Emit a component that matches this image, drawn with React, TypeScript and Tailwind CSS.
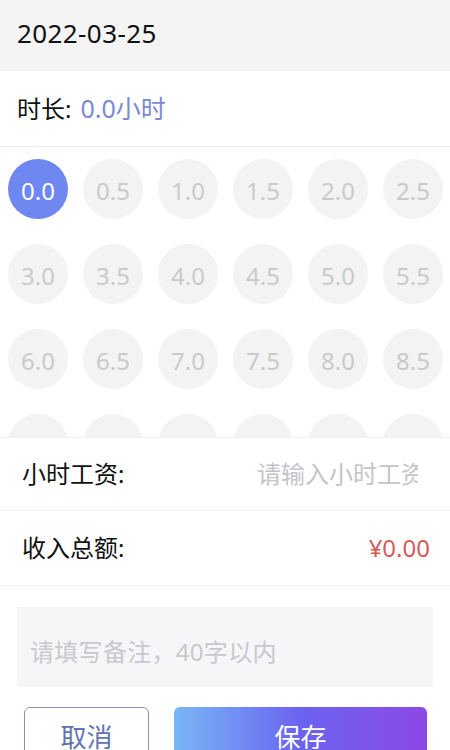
import React from "react";

const values = Array.from({ length: 24 }, (_, i) => (i * 0.5).toFixed(1));

export default function App() {
  const font = { fontFamily: '"Noto Sans", "Noto Sans CJK SC", sans-serif' };
  return (
    <div className="w-[450px] h-[750px] overflow-hidden bg-white text-[#111]" style={font}>
      <div className="h-[71px] bg-[#f4f4f4] flex items-center px-[17px] pb-[5px]">
        <span className="text-[26px] tracking-[0.4px]">2022-03-25</span>
      </div>
      <div className="h-[76px] flex items-center px-[17px] border-b border-[#efefef]">
        <span className="text-[24px]">时长:</span>
        <span className="text-[25px] text-[#7a8ad3] ml-[9px]">0.0小时</span>
      </div>
      <div className="h-[290px] overflow-hidden pt-[12px] pl-[8px]">
        <div className="grid grid-cols-[repeat(6,60px)] gap-x-[15px] gap-y-[25px]">
          {values.map((v, i) => (
            <div
              key={v}
              className={
                i === 0
                  ? "w-[60px] h-[60px] rounded-full bg-[#6f87f1] text-white flex items-center justify-center text-[24px] pt-[4px]"
                  : "w-[60px] h-[60px] rounded-full bg-[#f3f3f3] text-[#cacaca] flex items-center justify-center text-[24px] pt-[4px]"
              }
            >
              {v}
            </div>
          ))}
        </div>
      </div>
      <div className="h-[74px] flex items-center justify-between pl-[22px] pr-[32px] border-t border-b border-[#f0f0f0]">
        <span className="text-[24px]">小时工资:</span>
        <input
          className="w-[161px] text-[24px] outline-none bg-transparent placeholder:text-[#c4c4ca]"
          placeholder="请输入小时工资"
          style={font}
        />
      </div>
      <div className="h-[75px] flex items-center justify-between pl-[22px] pr-[20px] border-b border-[#f0f0f0]">
        <span className="text-[24px]">收入总额:</span>
        <span className="text-[24px] text-[#d65a5a]">¥0.00</span>
      </div>
      <div className="mt-[21px] mx-[17px] h-[80px] bg-[#f6f6f8] flex items-center px-[13px] pt-[10px]">
        <span className="text-[24px] text-[#c8c8cd] tracking-[0.3px]">请填写备注，40字以内</span>
      </div>
      <div className="mt-[20px] flex pl-[24px] gap-[25px]">
        <div className="w-[125px] h-[56px] rounded-[6px] border border-[#8b94b8] flex items-center justify-center text-[26px] text-[#6272b2] pt-[4px]">
          取消
        </div>
        <div className="w-[253px] h-[56px] rounded-[6px] bg-gradient-to-r from-[#7ab6f4] via-[#6a62f0] to-[#8c48e6] flex items-center justify-center text-[26px] text-white pt-[4px]">
          保存
        </div>
      </div>
    </div>
  );
}
